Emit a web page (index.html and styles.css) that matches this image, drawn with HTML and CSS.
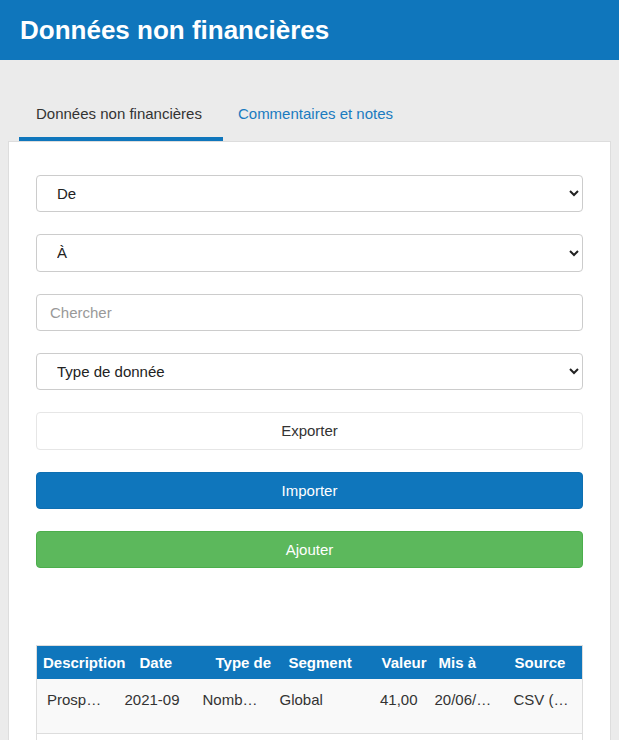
FILE: index.html
```html
<!DOCTYPE html>
<html lang="fr">
<head>
  <meta charset="UTF-8">
  <meta name="viewport" content="width=device-width, initial-scale=1.0">
  <title>Données non financières</title>
  <link rel="stylesheet" href="styles.css">
</head>
<body>
  <header class="topbar">
    <h1>Données non financières</h1>
  </header>
  <main class="page">
    <ul class="tabs">
      <li class="tab active"><a href="#">Données non financières</a></li>
      <li class="tab"><a href="#">Commentaires et notes</a></li>
    </ul>
    <section class="panel">
      <form class="filters" action="#">
        <select class="field" name="from">
          <option>De</option>
        </select>
        <select class="field" name="to">
          <option>À</option>
        </select>
        <input class="field search" type="text" name="q" placeholder="Chercher">
        <select class="field" name="type">
          <option>Type de donnée</option>
        </select>
        <button type="button" class="btn btn-default">Exporter</button>
        <button type="button" class="btn btn-primary">Importer</button>
        <button type="button" class="btn btn-success">Ajouter</button>
      </form>

      <table class="datatable">
        <colgroup>
          <col style="width:78px">
          <col style="width:78px">
          <col style="width:77px">
          <col style="width:78px">
          <col style="width:77px">
          <col style="width:79px">
          <col style="width:79px">
        </colgroup>
        <thead>
          <tr>
            <th>Description</th>
            <th>Date</th>
            <th>Type de</th>
            <th>Segment</th>
            <th>Valeur</th>
            <th>Mis à</th>
            <th>Source</th>
          </tr>
        </thead>
        <tbody>
          <tr>
            <td>Prospects</td>
            <td>2021-09</td>
            <td>Nombre de prospects</td>
            <td>Global</td>
            <td class="num">41,00</td>
            <td>20/06/2022</td>
            <td>CSV (import)</td>
          </tr>
          <tr>
            <td>Clients</td>
            <td>2021-09</td>
            <td>Nombre de clients</td>
            <td>Global</td>
            <td class="num">12,00</td>
            <td>20/06/2022</td>
            <td>CSV (import)</td>
          </tr>
        </tbody>
      </table>
    </section>
  </main>
</body>
</html>
```

FILE: styles.css
```css
body{
  margin: 0;
  font-family: "Liberation Sans", Arial, sans-serif;
  font-size: 15px;
  color: #333;
  background-color: #ebebeb;
}
a{
  text-decoration: none;
}

.topbar{
  height: 60px;
  background-color: #0f76bc;
}
.topbar > h1{
  margin: 0;
  padding-left: 20px;
  font-size: 26px;
  line-height: 60px;
  color: #fff;
}

.page{
  padding: 0 8px;
}

.tabs{
  display: flex;
  margin: 31px 0 0 11px;
  padding: 0;
  list-style: none;
}
.tab > a{
  display: block;
  padding: 13px 15px;
  line-height: 20px;
  color: #1a7bc0;
  border-bottom: 4px solid transparent;
}
.tab.active > a{
  padding: 13px 21px 13px 17px;
  color: #333;
  border-bottom-color: #0f76bc;
}

.panel{
  min-height: 700px;
  padding: 33px 27px;
  background-color: #fff;
  border: 1px solid #ddd;
}

.filters{
  display: flex;
  flex-direction: column;
  gap: 22px;
}
.field, .btn{
  box-sizing: border-box;
  height: 37.34px;
  width: 100%;
  margin: 0;
  font-family: inherit;
  font-size: 15px;
  border-radius: 4px;
}
.field{
  padding: 0 10px 0 16px;
  color: #222;
  background-color: #fff;
  border: 1px solid #ccc;
}
.field.search{
  padding-left: 13px;
}
.field.search::placeholder{
  color: #999;
}
.btn{
  border: 1px solid transparent;
  cursor: pointer;
}
.btn-default{
  color: #333;
  background-color: #fff;
  border-color: #e6e6e6;
}
.btn-primary{
  color: #fff;
  background-color: #0f76bc;
  border-color: #0e6fb1;
}
.btn-success{
  color: #fff;
  background-color: #5cb85c;
  border-color: #4cae4c;
}

.datatable{
  width: 100%;
  margin-top: 77px;
  table-layout: fixed;
  border-collapse: collapse;
  border: 1px solid #ddd;
}
.datatable th{
  padding: 7px 0 6px;
  line-height: 20px;
  text-align: left;
  white-space: nowrap;
  color: #fff;
  background-color: #0f76bc;
}
.datatable th:nth-child(1){ padding-left: 6px; }
.datatable th:nth-child(2){ padding-left: 25px; }
.datatable th:nth-child(3){ padding-left: 23px; }
.datatable th:nth-child(4){ padding-left: 19px; }
.datatable th:nth-child(5){ padding-left: 34px; }
.datatable th:nth-child(6){ padding-left: 14px; }
.datatable th:nth-child(7){ padding-left: 11px; }

.datatable td{
  padding: 11px 10px 23px;
  line-height: 20px;
  white-space: nowrap;
  overflow: hidden;
  text-overflow: ellipsis;
  border-bottom: 1px solid #ddd;
}
.datatable td.num{
  text-align: right;
  padding-right: 7px;
}
.datatable td:last-child{
  padding-right: 12px;
}
.datatable tbody tr:nth-child(odd){
  background-color: #f9f9f9;
}
```
